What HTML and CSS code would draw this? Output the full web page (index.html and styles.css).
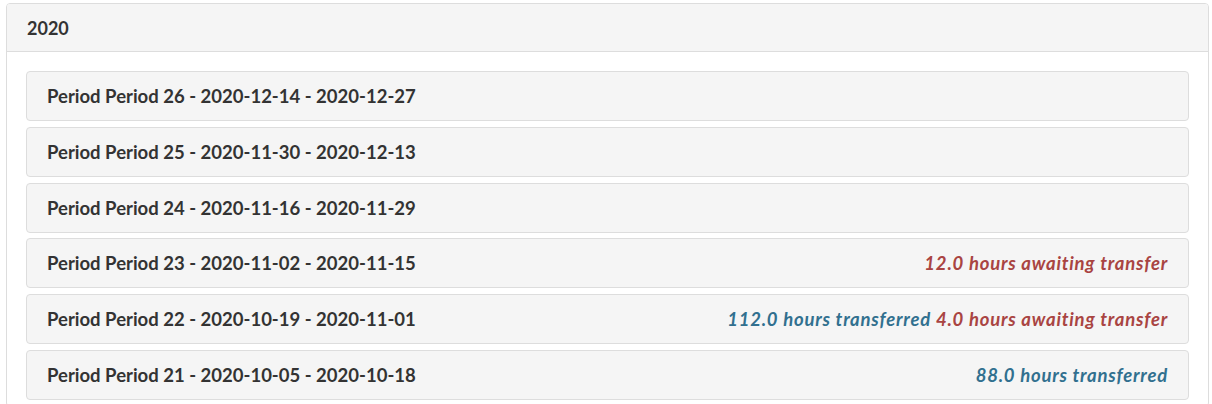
FILE: index.html
```html
<!DOCTYPE html>
<html>
<head>
<meta charset="utf-8">
<link rel="stylesheet" href="styles.css">
</head>
<body>
<div class="panel">
  <div class="panel-heading">2020</div>
  <div class="panel-body">
    <div class="period"><span class="title">Period Period 26 - 2020-12-14 - 2020-12-27</span></div>
    <div class="period"><span class="title">Period Period 25 - 2020-11-30 - 2020-12-13</span></div>
    <div class="period"><span class="title">Period Period 24 - 2020-11-16 - 2020-11-29</span></div>
    <div class="period"><span class="title">Period Period 23 - 2020-11-02 - 2020-11-15</span><span class="status"><span class="danger">12.0 hours awaiting transfer</span></span></div>
    <div class="period"><span class="title">Period Period 22 - 2020-10-19 - 2020-11-01</span><span class="status"><span class="info">112.0 hours transferred</span> <span class="danger">4.0 hours awaiting transfer</span></span></div>
    <div class="period"><span class="title">Period Period 21 - 2020-10-05 - 2020-10-18</span><span class="status"><span class="info">88.0 hours transferred</span></span></div>
  </div>
</div>
</body>
</html>
```

FILE: styles.css
```css
html, body {
  background: #fff;
}
body {
  margin: 3px 3px 0 6px;
  font-family: Lato, "Liberation Sans", sans-serif;
  color: #333;
  overflow: hidden;
}
.panel {
  border: 1px solid #ddd;
  border-radius: 4px;
  background: #fff;
}
.panel-heading {
  background: #f5f5f5;
  border-bottom: 1px solid #ddd;
  border-radius: 3px 3px 0 0;
  height: 47px;
  box-sizing: content-box;
  padding: 0 20px;
  display: flex;
  align-items: center;
  font-size: 18px;
  font-weight: 700;
}
.panel-body {
  padding: 19px 19px 0 19px;
}
.period {
  border: 1px solid #ddd;
  border-radius: 4px;
  background: #f5f5f5;
  height: 48px;
  padding: 0 20px;
  display: flex;
  align-items: center;
  justify-content: space-between;
  font-size: 18.5px;
  font-weight: 700;
  margin-bottom: 5.8px;
}
.status {
  font-style: italic;
  letter-spacing: 0.78px;
}
.danger {
  color: #a94442;
}
.info {
  color: #31708f;
}
```
